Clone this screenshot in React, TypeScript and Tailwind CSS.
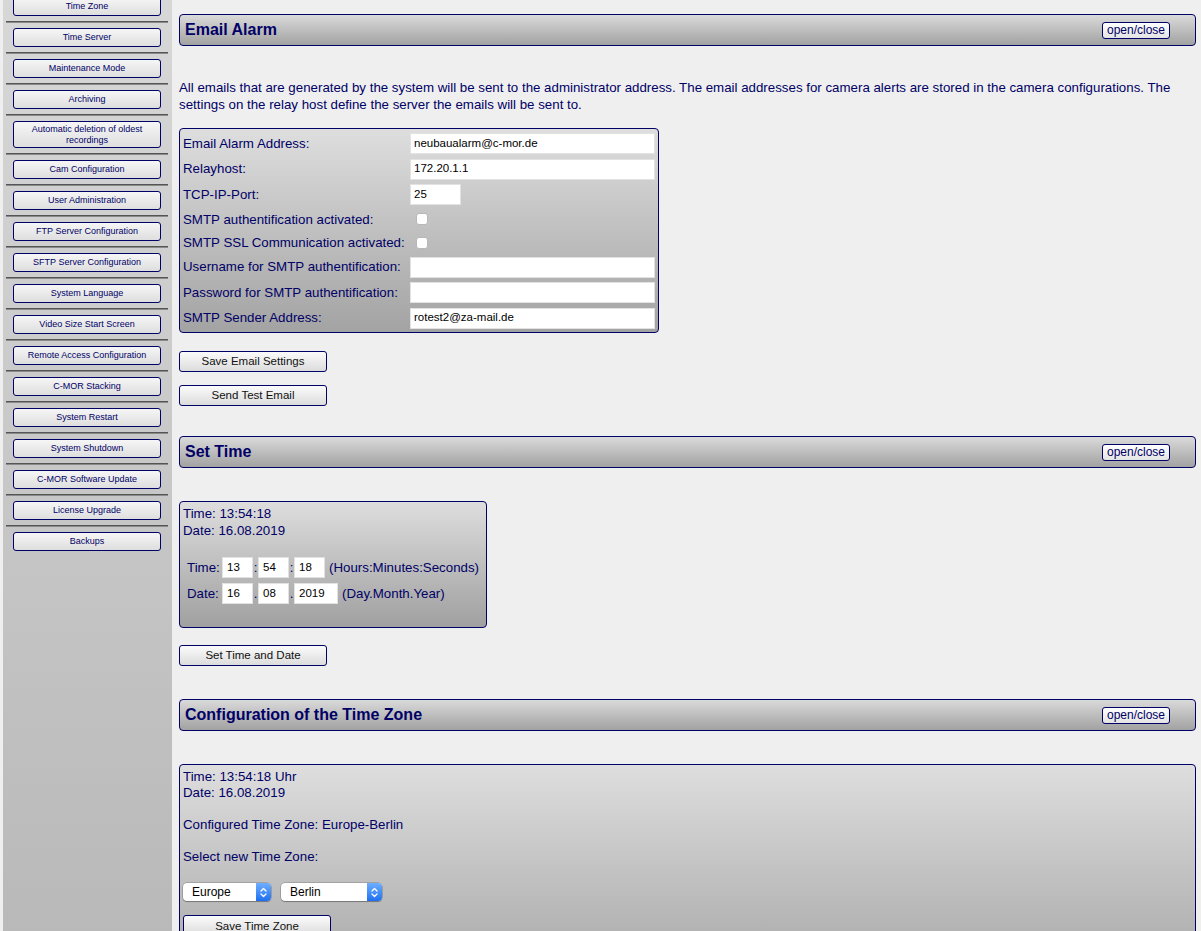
import React from 'react';

const menuItems = [
  'Time Zone',
  'Time Server',
  'Maintenance Mode',
  'Archiving',
  'Automatic deletion of oldest recordings',
  'Cam Configuration',
  'User Administration',
  'FTP Server Configuration',
  'SFTP Server Configuration',
  'System Language',
  'Video Size Start Screen',
  'Remote Access Configuration',
  'C-MOR Stacking',
  'System Restart',
  'System Shutdown',
  'C-MOR Software Update',
  'License Upgrade',
  'Backups',
];

function Sidebar() {
  return (
    <aside className="ml-[3px] h-full w-[169px] shrink-0 bg-linear-to-b from-[#d7d7d7] to-[#b9b9b9]">
      <div className="-mt-[3px] flex flex-col">
        {menuItems.map((item, i) => (
          <div key={item}>
            <button
              className={`ml-[10px] flex w-[148px] items-center justify-center rounded-[3px] border border-[#000066] bg-linear-to-b from-[#f6f6f6] to-[#dedede] px-[8px] text-center text-[9px] leading-[11px] text-[#000066] ${
                item.startsWith('Automatic') ? 'h-[27px]' : 'h-[19px]'
              }`}
            >
              {item}
            </button>
            {i < menuItems.length - 1 && (
              <div className="my-[5px] ml-[3px] mr-[4px] h-[2px] border-t border-[#555] bg-[#8a8a8a]" />
            )}
          </div>
        ))}
      </div>
    </aside>
  );
}

function SectionHeader({ title, className = '' }: { title: string; className?: string }) {
  return (
    <div
      className={`flex h-[32px] items-center justify-between rounded-[4px] border border-[#000066] bg-linear-to-b from-[#dadada] to-[#a2a2a2] pl-[5px] pr-[25px] ${className}`}
    >
      <h2 className="text-[16px] font-bold text-[#000066]">{title}</h2>
      <button className="h-[17px] rounded-[3px] border border-[#000066] bg-linear-to-b from-white to-[#e4e4e4] px-[4px] text-[12px] leading-none text-[#000066]">
        open/close
      </button>
    </div>
  );
}

function ActionButton({ label, className = '' }: { label: string; className?: string }) {
  return (
    <button
      className={`block h-[21px] w-[148px] rounded-[3px] border border-[#000066] bg-linear-to-b from-[#fbfbfb] to-[#dcdcdc] text-[11.5px] text-[#111] ${className}`}
    >
      {label}
    </button>
  );
}

function TextField({ value = '', className = '' }: { value?: string; className?: string }) {
  return (
    <div
      className={`flex h-[21px] items-center border border-[#e2e2e2] bg-white pl-[3px] text-[11.5px] text-black ${className}`}
    >
      {value}
    </div>
  );
}

function Checkbox() {
  return <span className="ml-[6px] block h-[12px] w-[12px] rounded-[3px] border border-[#b8b8b8] bg-white" />;
}

function FormRow({ label, children, short }: { label: string; children: React.ReactNode; short?: boolean }) {
  return (
    <div className={`grid grid-cols-[227px_245px] items-center ${short ? 'h-[19px]' : 'h-[21px]'}`}>
      <span className="whitespace-nowrap">{label}</span>
      <div>{children}</div>
    </div>
  );
}

function Chevrons() {
  return (
    <svg width="7" height="11" viewBox="0 0 7 11" fill="none" stroke="white" strokeWidth="1.3" strokeLinecap="round" strokeLinejoin="round">
      <path d="M1 4 L3.5 1.5 L6 4" />
      <path d="M1 7 L3.5 9.5 L6 7" />
    </svg>
  );
}

function FakeSelect({ label, className }: { label: string; className: string }) {
  return (
    <div
      className={`flex h-[18px] items-center rounded-[4px] bg-white shadow-[0_0_0_0.5px_rgba(0,0,0,0.3),0_1px_1px_rgba(0,0,0,0.25)] ${className}`}
    >
      <span className="flex-1 pl-[9px] text-[12px] text-black">{label}</span>
      <span className="flex h-full w-[15px] items-center justify-center rounded-r-[4px] bg-linear-to-b from-[#6eaefe] to-[#1c6ff0]">
        <Chevrons />
      </span>
    </div>
  );
}

function EmailAlarm() {
  return (
    <section>
      <SectionHeader title="Email Alarm" className="mt-[14px]" />
      <p className="mt-[33px] text-[13.3px] leading-[17px] text-[#000066]">
        All emails that are generated by the system will be sent to the administrator address. The email addresses for camera alerts are stored in
        the camera configurations. The settings on the relay host define the server the emails will be sent to.
      </p>
      <div className="mt-[15px] flex h-[205px] w-[480px] flex-col gap-[4.5px] rounded-[4px] border border-[#000066] bg-linear-to-b from-[#dedede] to-[#a3a3a3] px-[3px] pt-[4px] text-[13.3px] text-[#000066]">
        <FormRow label="Email Alarm Address:">
          <TextField value="neubaualarm@c-mor.de" />
        </FormRow>
        <FormRow label="Relayhost:">
          <TextField value="172.20.1.1" />
        </FormRow>
        <FormRow label="TCP-IP-Port:">
          <TextField value="25" className="w-[51px]" />
        </FormRow>
        <FormRow label="SMTP authentification activated:" short>
          <Checkbox />
        </FormRow>
        <FormRow label="SMTP SSL Communication activated:" short>
          <Checkbox />
        </FormRow>
        <FormRow label="Username for SMTP authentification:">
          <TextField />
        </FormRow>
        <FormRow label="Password for SMTP authentification:">
          <TextField />
        </FormRow>
        <FormRow label="SMTP Sender Address:">
          <TextField value="rotest2@za-mail.de" />
        </FormRow>
      </div>
      <ActionButton label="Save Email Settings" className="mt-[18px]" />
      <ActionButton label="Send Test Email" className="mt-[13px]" />
    </section>
  );
}

function SmallInput({ value, className }: { value: string; className: string }) {
  return (
    <div className={`flex h-[21px] items-center border border-[#e2e2e2] bg-white pl-[4px] text-[11.5px] text-black ${className}`}>
      {value}
    </div>
  );
}

function SetTime() {
  return (
    <section>
      <SectionHeader title="Set Time" className="mt-[30px]" />
      <div className="mt-[33px] h-[127px] w-[308px] rounded-[4px] border border-[#000066] bg-linear-to-b from-[#dedede] to-[#a0a0a0] px-[3px] pt-[3px] text-[13.3px] leading-[17px] text-[#000066]">
        <div>Time: 13:54:18</div>
        <div>Date: 16.08.2019</div>
        <div className="mt-[18px] flex flex-col gap-[5px] pl-[4px]">
          <div className="flex h-[21px] items-center whitespace-nowrap">
            <span className="w-[35px]">Time:</span>
            <SmallInput value="13" className="w-[31px]" />
            <span className="w-[5px] text-center">:</span>
            <SmallInput value="54" className="w-[31px]" />
            <span className="w-[5px] text-center">:</span>
            <SmallInput value="18" className="w-[31px]" />
            <span className="ml-[4px]">(Hours:Minutes:Seconds)</span>
          </div>
          <div className="flex h-[21px] items-center whitespace-nowrap">
            <span className="w-[35px]">Date:</span>
            <SmallInput value="16" className="w-[31px]" />
            <span className="w-[5px] text-center">.</span>
            <SmallInput value="08" className="w-[31px]" />
            <span className="w-[5px] text-center">.</span>
            <SmallInput value="2019" className="w-[44px]" />
            <span className="ml-[4px]">(Day.Month.Year)</span>
          </div>
        </div>
      </div>
      <ActionButton label="Set Time and Date" className="mt-[17px]" />
    </section>
  );
}

function TimeZoneConfig() {
  return (
    <section>
      <SectionHeader title="Configuration of the Time Zone" className="mt-[33px]" />
      <div className="mt-[33px] h-[260px] rounded-[4px] border border-[#000066] bg-linear-to-b from-[#dedede] to-[#9c9c9c] px-[3px] pt-[4px] text-[13.3px] leading-[16px] text-[#000066]">
        <div>Time: 13:54:18 Uhr</div>
        <div>Date: 16.08.2019</div>
        <div className="mt-[16px]">Configured Time Zone: Europe-Berlin</div>
        <div className="mt-[16px]">Select new Time Zone:</div>
        <div className="mt-[18px] flex gap-[10px]">
          <FakeSelect label="Europe" className="w-[88px]" />
          <FakeSelect label="Berlin" className="w-[101px]" />
        </div>
        <ActionButton label="Save Time Zone" className="mt-[14px]" />
      </div>
    </section>
  );
}

export default function App() {
  return (
    <div className="flex h-[931px] w-full overflow-hidden bg-[#efefef] font-['Liberation_Sans',Arial,sans-serif]">
      <Sidebar />
      <main className="min-w-0 flex-1 pl-[7px] pr-[5px]">
        <EmailAlarm />
        <SetTime />
        <TimeZoneConfig />
      </main>
    </div>
  );
}
